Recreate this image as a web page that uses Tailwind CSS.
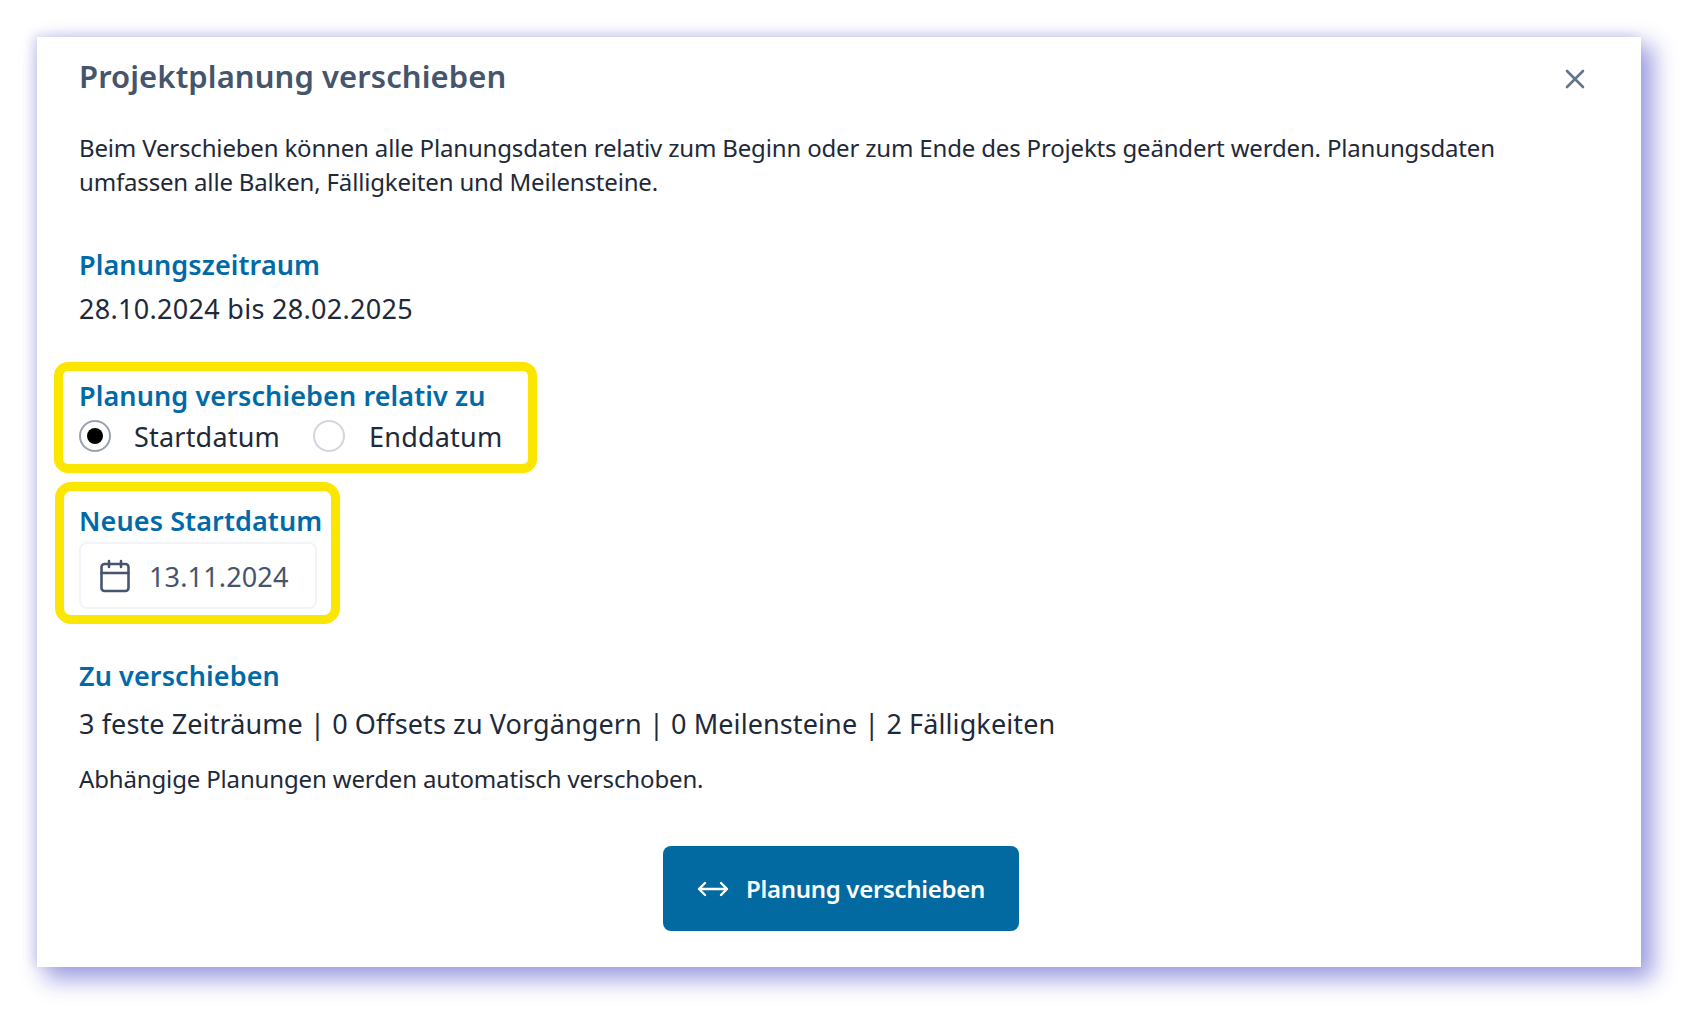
<!DOCTYPE html>
<html lang="de">
<head>
<meta charset="utf-8">
<script src="https://cdn.jsdelivr.net/npm/@tailwindcss/browser@4"></script>
<title>Projektplanung verschieben</title>
</head>
<body class="bg-white w-[1700px] h-[1027px] overflow-hidden font-['Noto_Sans','Open_Sans',sans-serif]">
<div class="pt-[37px] pl-[37px]">
  <div class="relative w-[1604px] h-[930px] bg-white pl-[42px] shadow-[10px_10px_22px_2px_#9c9ce0,-4px_-2px_10px_0_#dcdcf4]">
    <h2 class="pt-[16px] h-[64px] leading-[46px] text-[31px] font-semibold tracking-[0.08px] text-slate-600">Projektplanung verschieben</h2>
    <button class="absolute left-[1528px] top-[32px] w-[20px] h-[20px] text-slate-500" aria-label="Schließen">
      <svg viewBox="0 0 20 20" class="w-5 h-5" fill="none" stroke="currentColor" stroke-width="2.6" stroke-linecap="round"><path d="M2 2l16 16M18 2L2 18"/></svg>
    </button>
    <p class="mt-[30px] w-[1450px] text-[24px] leading-[34px] tracking-[-0.17px] text-gray-800">Beim Verschieben können alle Planungsdaten relativ zum Beginn oder zum Ende des Projekts geändert werden. Planungsdaten umfassen alle Balken, Fälligkeiten und Meilensteine.</p>
    <h3 class="mt-[46px] h-[40px] leading-[40px] text-[27px] font-semibold tracking-[0.1px] text-sky-700">Planungszeitraum</h3>
    <div class="mt-[4px] h-[40px] leading-[40px] text-[27px] tracking-[0.3px] text-gray-800">28.10.2024 bis 28.02.2025</div>
    <div class="mt-[33px] -ml-[25px] w-[483px] h-[111px] border-[9px] border-[#fae600] rounded-[14px] pl-[16px]">
      <h3 class="pt-[6px] h-[38px] leading-[38px] text-[27px] font-semibold tracking-[0.1px] text-sky-700 whitespace-nowrap">Planung verschieben relativ zu</h3>
      <div class="mt-[9px] flex items-center h-[36px] text-[27px] tracking-[0.2px] text-gray-800">
        <span class="w-[32px] h-[32px] rounded-full border-2 border-gray-400 bg-white flex items-center justify-center"><span class="w-[16px] h-[16px] rounded-full bg-black"></span></span>
        <span class="ml-[23px] leading-[36px] translate-y-[1px]">Startdatum</span>
        <span class="ml-[33px] w-[32px] h-[32px] rounded-full border-2 border-gray-300 bg-white"></span>
        <span class="ml-[24px] leading-[36px] translate-y-[1px]">Enddatum</span>
      </div>
    </div>
    <div class="mt-[9px] -ml-[24px] w-[285px] h-[142px] border-[9px] border-[#fae600] rounded-[16px] pl-[15px]">
      <h3 class="pt-[11px] h-[51px] leading-[38px] text-[27px] font-semibold tracking-[0.1px] text-sky-700 whitespace-nowrap">Neues Startdatum</h3>
      <div class="w-[238px] h-[67px] border-2 border-slate-100 rounded-[8px] flex items-center pl-[19px] text-[27px] tracking-[0.15px] text-slate-600">
        <svg viewBox="0 0 24 24" class="w-[36px] h-[36px] -ml-[3px]" fill="none" stroke="currentColor" stroke-width="1.7" stroke-linecap="round" stroke-linejoin="round"><path d="M8 2v4M16 2v4M3 10h18"/><rect x="3" y="4" width="18" height="18" rx="2"/></svg>
        <span class="ml-[16px] translate-y-[2px]">13.11.2024</span>
      </div>
    </div>
    <h3 class="mt-[32px] h-[40px] leading-[40px] text-[27px] font-semibold tracking-[0.1px] text-sky-700">Zu verschieben</h3>
    <div class="mt-[8px] h-[40px] leading-[40px] text-[27px] tracking-[0.1px] text-gray-800">3 feste Zeiträume | 0 Offsets zu Vorgängern | 0 Meilensteine | 2 Fälligkeiten</div>
    <p class="mt-[18px] h-[34px] leading-[34px] text-[24px] tracking-[-0.15px] text-gray-800">Abhängige Planungen werden automatisch verschoben.</p>
    <div class="mt-[50px] -ml-[42px] flex justify-center pl-[4px]">
      <button class="w-[356px] h-[85px] rounded-[8px] bg-[#0369a1] text-white flex items-center justify-center text-[24px] font-semibold tracking-[-0.3px]">
        <svg viewBox="0 0 32 16" class="w-[32px] h-[16px]" fill="none" stroke="currentColor" stroke-width="2.4" stroke-linecap="round" stroke-linejoin="round"><path d="M2 8h28M8 2L2 8l6 6M24 2l6 6-6 6"/></svg>
        <span class="ml-[17px]">Planung verschieben</span>
      </button>
    </div>
  </div>
</div>
</body>
</html>
